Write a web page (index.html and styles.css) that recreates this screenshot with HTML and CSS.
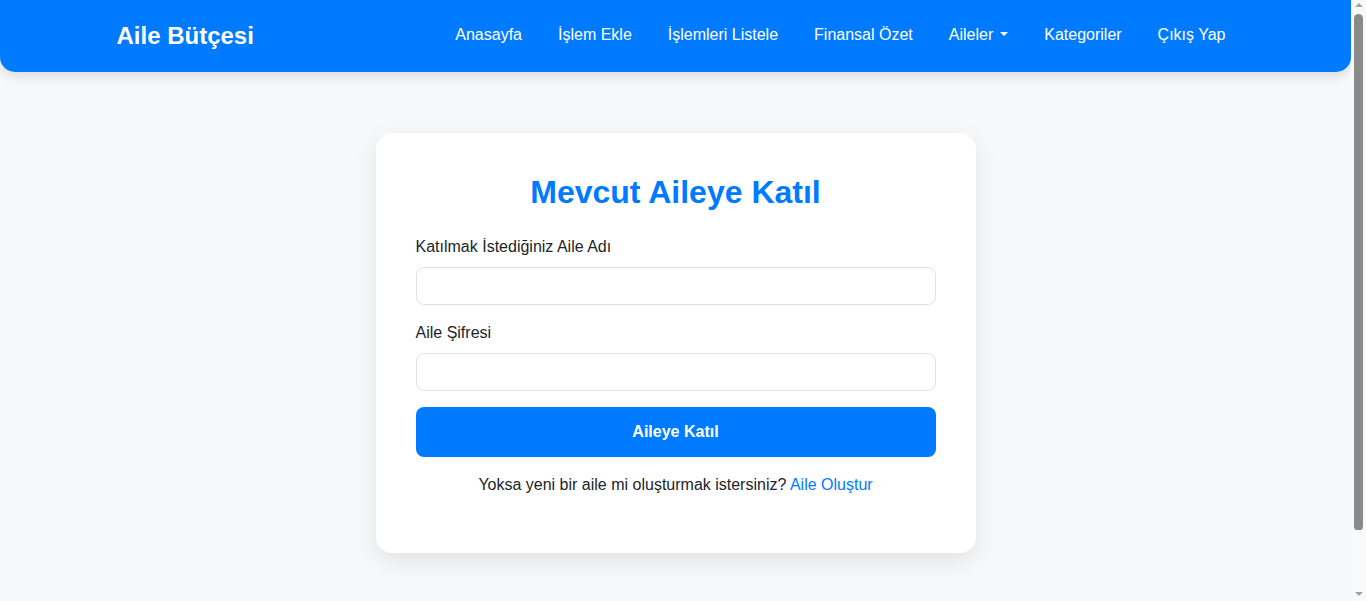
FILE: index.html
```html
<!DOCTYPE html>
<html lang="tr">
<head>
<meta charset="utf-8">
<title>Aile Bütçesi</title>
<link rel="stylesheet" href="styles.css">
</head>
<body>
<nav class="navbar">
  <div class="container nav-inner">
    <a class="brand" href="#">Aile Bütçesi</a>
    <ul class="nav-links">
      <li><a href="#">Anasayfa</a></li>
      <li><a href="#">İşlem Ekle</a></li>
      <li><a href="#">İşlemleri Listele</a></li>
      <li><a href="#">Finansal Özet</a></li>
      <li><a href="#" class="dropdown">Aileler</a></li>
      <li><a href="#">Kategoriler</a></li>
      <li><a href="#">Çıkış Yap</a></li>
    </ul>
  </div>
</nav>
<main class="main">
  <div class="card">
    <h2 class="card-title">Mevcut Aileye Katıl</h2>
    <form class="form">
      <div class="field">
        <label class="label" for="fam">Katılmak İstediğiniz Aile Adı</label>
        <input class="input" id="fam" type="text">
      </div>
      <div class="field">
        <label class="label" for="pw">Aile Şifresi</label>
        <input class="input" id="pw" type="password">
      </div>
      <button class="btn" type="button">Aileye Katıl</button>
    </form>
    <p class="alt">Yoksa yeni bir aile mi oluşturmak istersiniz? <a href="#">Aile Oluştur</a></p>
  </div>
</main>
<div class="scrollbar" aria-hidden="true">
  <span class="sb-arrow sb-up"></span>
  <span class="sb-thumb"></span>
  <span class="sb-arrow sb-down"></span>
</div>
</body>
</html>
```

FILE: styles.css
```css
* { box-sizing: border-box; }
html, body { margin: 0; padding: 0; }
body {
  font-family: "Liberation Sans", Arial, sans-serif;
  font-size: 16px;
  line-height: 1.5;
  color: #212529;
  background: #f7f8fa;
  margin-right: 15px;
}
a { text-decoration: none; }
.navbar {
  background: #007bff;
  height: 72px;
  border-radius: 0 0 15px 15px;
  box-shadow: 0 4px 12px rgba(0, 0, 0, 0.12);
}
.container {
  max-width: 1140px;
  margin: 0 auto;
  padding: 0 12px;
}
.nav-inner {
  height: 100%;
  display: flex;
  align-items: center;
  justify-content: space-between;
}
.brand {
  color: #fff;
  font-weight: 700;
  font-size: 24px;
  line-height: 1;
  margin-top: -1px;
  margin-left: -1px;
}
.nav-links {
  list-style: none;
  margin: 0;
  padding: 0;
  display: flex;
  gap: 20px;
  margin-top: -3px;
}
.nav-links a {
  color: #fff;
  display: block;
  padding: 8px;
}
.dropdown::after {
  content: "";
  display: inline-block;
  margin-left: 7px;
  vertical-align: 4px;
  border-top: 4px solid #fff;
  border-right: 4px solid transparent;
  border-left: 4px solid transparent;
}
.main {
  display: flex;
  justify-content: center;
  padding: 61px 0 113px;
}
.card {
  width: 600px;
  background: #fff;
  border-radius: 16px;
  padding: 40px;
  box-shadow: 0 8px 24px rgba(0, 0, 0, 0.09);
}
.card-title {
  margin: 0 0 24px;
  text-align: center;
  color: #007bff;
  font-size: 32px;
  line-height: 1.2;
  font-weight: 700;
}
.field { margin-bottom: 16px; }
.label {
  display: block;
  margin-bottom: 8px;
}
.input {
  display: block;
  width: 100%;
  height: 38px;
  border: 1px solid #dee2e6;
  border-radius: 8px;
  font: inherit;
  padding: 6px 12px;
  background: #fff;
}
.btn {
  display: block;
  width: 100%;
  height: 50px;
  border: 0;
  border-radius: 8px;
  background: #007bff;
  color: #fff;
  font: inherit;
  font-weight: 700;
}
.alt {
  text-align: center;
  margin: 16px 0;
}
.alt a { color: #007bff; }

/* imitation of the classic browser scrollbar */
.scrollbar {
  position: fixed;
  top: 0;
  right: 0;
  width: 15px;
  height: 100vh;
  background: #f9f9f9;
  display: flex;
  flex-direction: column;
  align-items: center;
  padding-top: 3px;
}
.sb-arrow {
  width: 0;
  height: 0;
  border-left: 4px solid transparent;
  border-right: 4px solid transparent;
}
.sb-up { border-bottom: 4px solid #a3a3a3; }
.sb-down {
  border-top: 4px solid #a3a3a3;
  margin-top: auto;
  margin-bottom: 5px;
}
.sb-thumb {
  width: 9px;
  height: 516px;
  margin-top: 7px;
  background: #8a8a8a;
  border-radius: 5px 5px 4px 4px;
}
```
